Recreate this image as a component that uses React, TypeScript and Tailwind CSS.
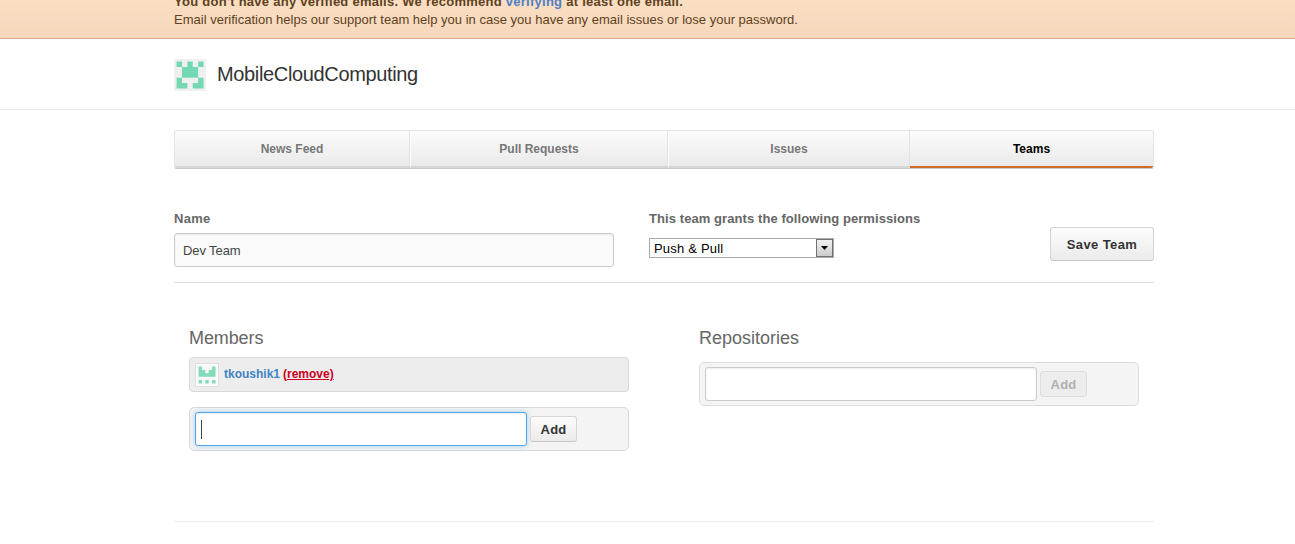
import React from "react";

function Identicon({ rows, color, background, className }: { rows: string[]; color: string; background: string; className: string }) {
  return (
    <svg viewBox="0 0 30 30" className={className}>
      <rect width="30" height="30" fill={background} />
      <path
        fill={color}
        d={rows
          .flatMap((row, y) =>
            row.split("").map((c, x) => (c === "X" ? `M${2.4 + x * 5.05} ${2.4 + y * 5.05}h5.1v5.1h-5.1z` : "")),
          )
          .join("")}
      />
    </svg>
  );
}

const button =
  "rounded-[3px] border border-[#d5d5d5] border-b-[#c8c8c8] bg-linear-to-b from-[#fcfcfc] to-[#ebebeb] pt-[2px] text-center text-[13px] font-bold text-[#333]";

export default function App() {
  return (
    <div className="h-[544px] overflow-hidden bg-white font-['Liberation_Sans',Arial,sans-serif] text-[12px] whitespace-nowrap text-[#666]">
      <div className="h-[39px] overflow-hidden border-b border-[#d5a584] bg-linear-to-b from-[#fbdfc3] to-[#f5d7bc] text-[#5f4120]">
        <div className="-mt-[7px] ml-[174px] text-[13px] leading-[18px]">
          <p className="font-bold tracking-[0.26px]">
            You don't have any verified emails. We recommend <a className="text-[#4f7fc5]">verifying</a> at least one email.
          </p>
          <p className="tracking-[0.01px]">
            Email verification helps our support team help you in case you have any email issues or lose your password.
          </p>
        </div>
      </div>

      <header className="h-[71px] border-b border-[#eaeaea] pt-5 pl-[174px]">
        <div className="flex">
          <Identicon className="size-8" color="#74d9b3" background="#f0f0f0" rows={["X.X.X", ".XXX.", ".XXX.", "X...X", "XX.XX"]} />
          <h1 className="ml-[11px] text-[20px] leading-[30px] tracking-[-0.35px] text-[#333]">MobileCloudComputing</h1>
        </div>
      </header>

      <main className="ml-[174px] w-[980px] pt-5">
        <nav className="flex h-[39px] overflow-hidden rounded-[3px] border border-[#e5e5e5] border-b-[#c8c8c8] bg-linear-to-b from-[#fbfbfb] to-[#e9e9e9] text-center font-bold leading-[36px] text-[#777]">
          <a className="w-[235px] border-r border-b-2 border-r-[#e2e2e2] border-b-[#d6d6d6]">News Feed</a>
          <a className="w-[258px] border-r border-b-2 border-l border-r-[#e2e2e2] border-b-[#d6d6d6] border-l-[#fcfcfc]">Pull Requests</a>
          <a className="w-[242px] border-r border-b-2 border-l border-r-[#e2e2e2] border-b-[#d6d6d6] border-l-[#fcfcfc]">Issues</a>
          <a className="flex-1 border-b-2 border-b-[#cd6b27] text-black">Teams</a>
        </nav>

        <section className="flex h-[114px] border-b border-[#ddd] pt-[41px]">
          <div className="w-[475px]">
            <label className="block text-[13px] leading-[18px] font-bold tracking-[0.3px]">Name</label>
            <div className="mt-[5px] h-[34px] w-[440px] rounded-[3px] border border-[#ccc] bg-[#fafafa] pl-2 text-[13px] leading-[33px] tracking-[-0.1px] text-[#444] shadow-[inset_0_1px_2px_rgba(0,0,0,0.07)]">
              Dev Team
            </div>
          </div>
          <div>
            <label className="block text-[13px] leading-[18px] font-bold tracking-[0.08px]">This team grants the following permissions</label>
            <div className="mt-[10px] flex h-5 w-[185px] items-center justify-between border border-[#aaa] bg-white pl-1 text-[13px] text-black">
              <span className="pt-px tracking-[0.2px]">Push &amp; Pull</span>
              <span className="flex h-[18px] w-[17px] items-center justify-center border border-[#707070] bg-linear-to-b from-[#f2f2f2] to-[#ccc]">
                <svg viewBox="0 0 7 4" className="h-1 w-[7px]"><path d="M0 0h7L3.5 4z" /></svg>
              </span>
            </div>
          </div>
          <button className={`${button} mt-[17px] ml-auto h-[34px] w-[104px] tracking-[0.4px]`}>Save Team</button>
        </section>

        <div className="flex h-[239px] gap-[70px] border-b border-[#eee] pt-[44px] pl-[15px]">
          <section className="w-[440px]">
            <h2 className="text-[18px] leading-[22px] tracking-[-0.1px]">Members</h2>
            <div className="mt-2 flex h-[35px] items-center rounded-[4px] border border-[#d8d8d8] bg-[#ededed] pl-[5px] font-bold">
              <span className="size-6 border border-[#ddd] bg-white p-px">
                <Identicon className="size-5" color="#84dbb9" background="#f8f8f8" rows={["X...X", "XX.XX", "XXXXX", ".....", "X.X.X"]} />
              </span>
              <span className="ml-[5px] pb-[2px] text-[#4183c4]">tkoushik1</span>
              <a className="ml-[3px] pb-[2px] text-[#cc0022] underline">(remove)</a>
            </div>
            <div className="mt-[15px] flex h-11 items-center rounded-[5px] border border-[#d8d8d8] bg-[#f4f4f4] pl-[5px]">
              <div className="flex h-[34px] w-[332px] items-center rounded-[3px] border border-[#51a7e8] bg-white pl-[5px] shadow-[inset_0_1px_2px_rgba(0,0,0,0.075),0_0_5px_rgba(81,167,232,0.5)]">
                <span className="h-[19px] w-px bg-[#444]" />
              </div>
              <button className={`${button} ml-[3px] h-[26px] w-[47px] tracking-[0.2px]`}>Add</button>
            </div>
          </section>
          <section className="w-[440px]">
            <h2 className="text-[18px] leading-[22px]">Repositories</h2>
            <div className="mt-[13px] flex h-11 items-center rounded-[5px] border border-[#dcdcdc] bg-[#f4f4f4] pl-[5px]">
              <div className="h-[34px] w-[332px] rounded-[3px] border border-[#ccc] bg-white shadow-[inset_0_1px_2px_rgba(0,0,0,0.075)]" />
              <button disabled className="ml-[3px] h-[26px] w-[47px] rounded-[3px] border border-[#ddd] bg-[#ededed] pt-[2px] text-center text-[13px] font-bold tracking-[0.2px] text-[#b0b0b0]">
                Add
              </button>
            </div>
          </section>
        </div>
      </main>
    </div>
  );
}
